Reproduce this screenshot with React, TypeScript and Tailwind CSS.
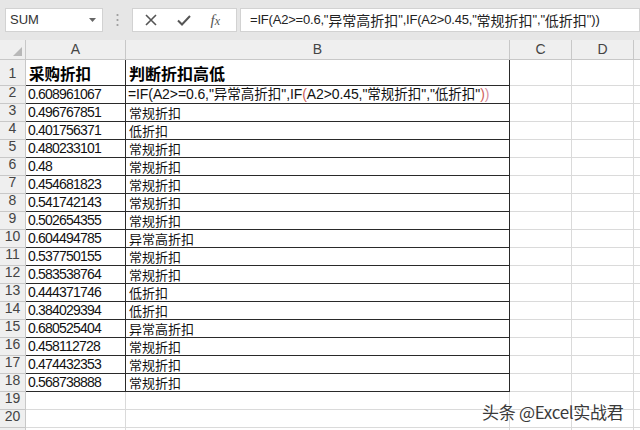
import React from 'react';

type Row = { a: string; b: string };

const rows: Row[] = [
  { a: '0.496767851', b: '常规折扣' },
  { a: '0.401756371', b: '低折扣' },
  { a: '0.480233101', b: '常规折扣' },
  { a: '0.48', b: '常规折扣' },
  { a: '0.454681823', b: '常规折扣' },
  { a: '0.541742143', b: '常规折扣' },
  { a: '0.502654355', b: '常规折扣' },
  { a: '0.604494785', b: '异常高折扣' },
  { a: '0.537750155', b: '常规折扣' },
  { a: '0.583538764', b: '常规折扣' },
  { a: '0.444371746', b: '低折扣' },
  { a: '0.384029394', b: '低折扣' },
  { a: '0.680525404', b: '异常高折扣' },
  { a: '0.458112728', b: '常规折扣' },
  { a: '0.474432353', b: '常规折扣' },
  { a: '0.568738888', b: '常规折扣' },
];

const latin = "font-['Liberation_Sans','Noto_Sans_CJK_SC',sans-serif]";
const cjk = "font-['Noto_Sans_CJK_SC',sans-serif]";

const RowNum: React.FC<{ n?: number; tall?: boolean }> = ({ n, tall }) => (
  <div
    className={`w-[26px] shrink-0 flex items-end justify-center bg-[#efefef] border-r border-b border-[#c8c8c8] text-[14px] text-[#444] ${latin} ${
      tall ? 'h-[26px] pb-[1px]' : 'h-[18px]'
    }`}
  >
    {n}
  </div>
);

const Blank: React.FC<{ w: string; h: string }> = ({ w, h }) => (
  <div className={`${w} ${h} shrink-0 border-r border-b border-[#dadada]`} />
);

const Tail: React.FC<{ h: string }> = ({ h }) => (
  <>
    <Blank w="w-[62px]" h={h} />
    <Blank w="w-[62px]" h={h} />
    <Blank w="w-[10px]" h={h} />
  </>
);

const Formula: React.FC = () => (
  <span className="tracking-[-0.1px]">
    =IF(A2&gt;=0.6,"<span className={`${cjk} tracking-normal text-[13.5px]`}>异常高折扣</span>",IF
    <span className="text-[#d0605a]">(</span>A2&gt;0.45,"
    <span className={`${cjk} tracking-normal text-[13.5px]`}>常规折扣</span>","
    <span className={`${cjk} tracking-normal text-[13.5px]`}>低折扣</span>"
    <span className="text-[#d0605a]">)</span>
    <span className="text-[#d890a0]">)</span>
  </span>
);

export default function App() {
  return (
    <div className="relative w-[640px] h-[430px] overflow-hidden bg-white">
      {/* formula bar */}
      <div className="h-[40px] bg-[#e6e6e6] flex items-center">
        <div className="ml-[5px] w-[98px] h-[24px] bg-white border border-[#d2d2d2] flex items-center justify-between pl-[4px] pr-[6px]">
          <span className={`text-[13px] text-[#333] ${latin}`}>SUM</span>
          <svg width="7" height="4" viewBox="0 0 7 4">
            <path d="M0 0 L7 0 L3.5 4 Z" fill="#666" />
          </svg>
        </div>
        <div className="w-[29px] flex justify-center">
          <svg width="3" height="14" viewBox="0 0 3 14">
            <circle cx="1.5" cy="2" r="1.1" fill="#9a9a9a" />
            <circle cx="1.5" cy="7" r="1.1" fill="#9a9a9a" />
            <circle cx="1.5" cy="12" r="1.1" fill="#9a9a9a" />
          </svg>
        </div>
        <div className="w-[105px] h-[24px] bg-white border border-[#d2d2d2] flex items-center justify-around pl-[2px] pr-[6px]">
          <svg width="12" height="12" viewBox="0 0 12 12">
            <path d="M1 1 L11 11 M11 1 L1 11" stroke="#555" strokeWidth="1.6" />
          </svg>
          <svg width="14" height="11" viewBox="0 0 14 11">
            <path d="M1 5.5 L5 9.5 L13 1" stroke="#555" strokeWidth="2" fill="none" />
          </svg>
          <span className="font-['Liberation_Serif',serif] italic text-[15px] text-[#555] leading-none">
            f<span className="text-[12px]">x</span>
          </span>
        </div>
        <div className={`ml-[3px] flex-1 h-[24px] bg-white border border-[#d2d2d2] flex items-center pl-[9px] text-[13px] text-[#222] whitespace-nowrap tracking-[-0.2px] ${latin}`}>
          =IF(A2&gt;=0.6,"<span className={`${cjk} text-[14px] tracking-normal`}>异常高折扣</span>",IF(A2&gt;0.45,"
          <span className={`${cjk} text-[14px] tracking-normal`}>常规折扣</span>","
          <span className={`${cjk} text-[14px] tracking-normal`}>低折扣</span>"))
        </div>
      </div>

      {/* column headers */}
      <div className={`flex h-[20px] bg-[#efefef] text-[14px] text-[#444] ${latin}`}>
        <div className="w-[26px] shrink-0 border-r border-b border-[#c8c8c8] flex items-end justify-end p-[3px]">
          <svg width="9" height="9" viewBox="0 0 9 9">
            <path d="M9 0 L9 9 L0 9 Z" fill="#b8b8b8" />
          </svg>
        </div>
        {['A', 'B', 'C', 'D'].map((c, i) => (
          <div
            key={c}
            className={`shrink-0 border-r border-b border-[#c8c8c8] flex items-center justify-center ${
              ['w-[100px]', 'w-[384px]', 'w-[62px]', 'w-[62px]'][i]
            }`}
          >
            {c}
          </div>
        ))}
        <div className="w-[10px] shrink-0 border-b border-[#c8c8c8]" />
      </div>

      {/* row 1: headings */}
      <div className="flex">
        <RowNum n={1} tall />
        <div className={`w-[100px] h-[26px] shrink-0 border-r border-b border-[#2a2a2a] flex items-end pl-[3px] text-[15.5px] font-bold text-black ${cjk}`}>
          采购折扣
        </div>
        <div className={`w-[384px] h-[26px] shrink-0 border-r border-b border-[#2a2a2a] flex items-end pl-[3px] text-[16px] font-bold text-black ${cjk}`}>
          判断折扣高低
        </div>
        <Tail h="h-[26px]" />
      </div>

      {/* row 2: formula being edited */}
      <div className="flex">
        <RowNum n={2} />
        <div className={`w-[100px] h-[18px] shrink-0 border-r border-b border-[#2a2a2a] flex items-end pl-[2px] text-[14px] tracking-[-0.8px] text-[#111] leading-[17px] ${latin}`}>
          0.608961067
        </div>
        <div className={`w-[384px] h-[18px] shrink-0 border-r border-b border-[#2a2a2a] flex items-end pl-[2px] text-[14px] text-[#111] leading-[17px] whitespace-nowrap ${latin}`}>
          <Formula />
        </div>
        <Tail h="h-[18px]" />
      </div>

      {rows.map((r, i) => (
        <div className="flex" key={i}>
          <RowNum n={i + 3} />
          <div className={`w-[100px] h-[18px] shrink-0 border-r border-b border-[#2a2a2a] flex items-end pl-[2px] text-[14px] tracking-[-0.8px] text-[#111] leading-[17px] ${latin}`}>
            {r.a}
          </div>
          <div className={`w-[384px] h-[18px] shrink-0 border-r border-b border-[#2a2a2a] flex items-end pl-[3px] text-[13px] text-[#111] leading-[17px] ${cjk}`}>
            {r.b}
          </div>
          <Tail h="h-[18px]" />
        </div>
      ))}

      {[19, 20].map((n) => (
        <div className="flex" key={n}>
          <RowNum n={n} />
          <Blank w="w-[100px]" h="h-[18px]" />
          <Blank w="w-[384px]" h="h-[18px]" />
          <Tail h="h-[18px]" />
        </div>
      ))}
      <div className="flex">
        <RowNum />
        <Blank w="w-[100px]" h="h-[18px]" />
        <Blank w="w-[384px]" h="h-[18px]" />
        <Tail h="h-[18px]" />
      </div>

      <div
        className={`absolute left-[482px] top-[399px] text-[17px] text-[#3a3a3a] whitespace-nowrap tracking-[-0.3px] ${cjk} [text-shadow:0_0_2px_#fff,0_0_2px_#fff]`}
      >
        头条 @Excel实战君
      </div>
    </div>
  );
}
